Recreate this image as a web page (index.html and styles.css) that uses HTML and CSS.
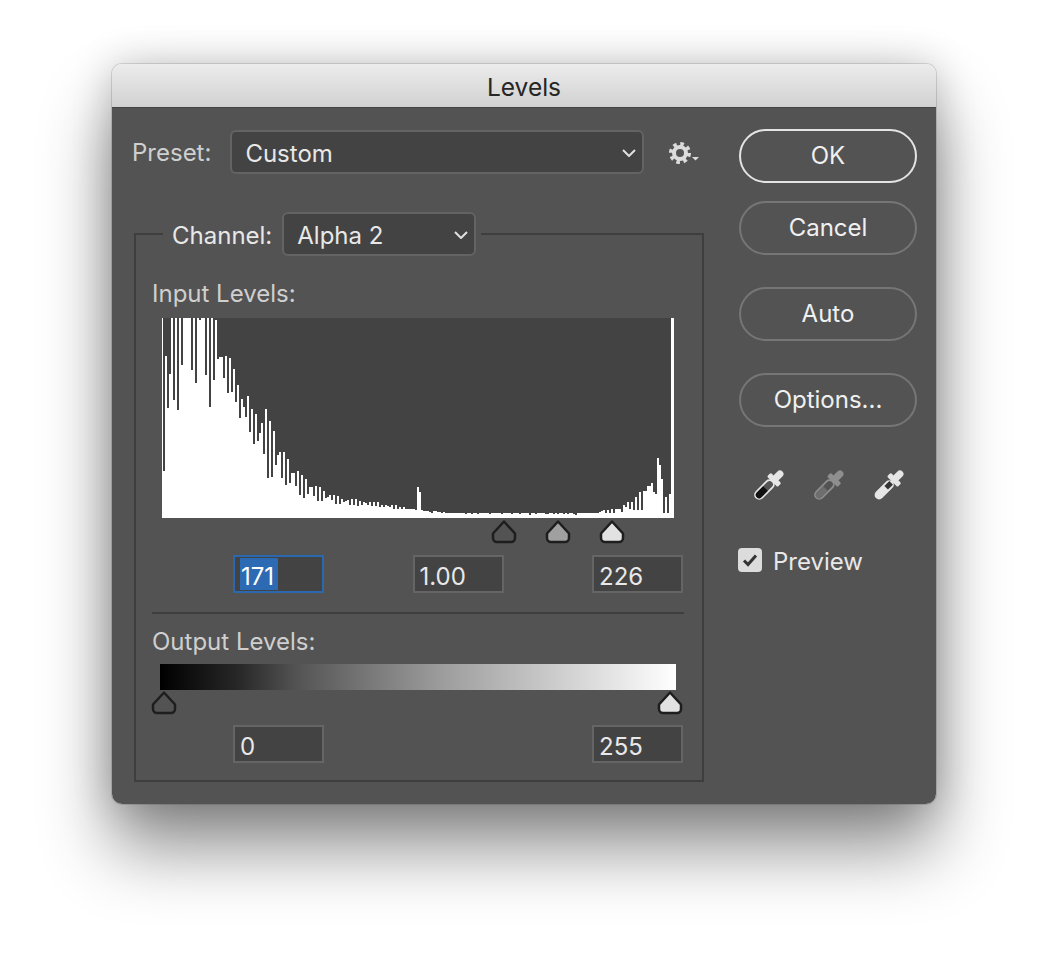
FILE: index.html
```html
<!DOCTYPE html>
<html lang="en">
<head>
    <meta charset="UTF-8">
    <title>Levels</title>
    <link rel="stylesheet" href="styles.css">
</head>
<body>

<div class="window">
    <div class="titlebar">Levels</div>
    <div class="content">
        <div class="main">
            <div class="preset-row">
                <span class="label-dim">Preset:</span>
                <div class="select select-preset">
                    <span>Custom</span>
                    <svg class="chevron" width="14" height="8" viewBox="0 0 14 8"><path d="M1 1l6 6 6-6"/></svg>
                </div>
                <svg class="gear" width="32" height="24" viewBox="0 0 32 24">
                    <circle class="gear-teeth" cx="11" cy="11" r="9"/>
                    <circle class="gear-ring" cx="11" cy="11" r="6"/>
                    <path class="gear-caret" d="M23 15h7l-3.500 3.500z"/>
                </svg>
            </div>

            <fieldset class="group">
                <legend class="channel">
                    <span class="channel-label">Channel:</span>
                    <div class="select select-channel">
                        <span>Alpha 2</span>
                        <svg class="chevron" width="14" height="8" viewBox="0 0 14 8"><path d="M1 1l6 6 6-6"/></svg>
                    </div>
                </legend>

                <div class="label-dim section-input">Input Levels:</div>
                <svg id="histogram" class="histogram" width="512" height="200" viewBox="0 0 512 200">
                    <path id="histogramPath" fill="#fff"/>
                </svg>
                <div class="markers-input">
                    <svg class="marker" viewBox="0 0 26 24"><path class="m-black" d="M13 1.500L24 13.500v4.500a4 4 0 0 1-4 4H6a4 4 0 0 1-4-4v-4.500z"/></svg>
                    <svg class="marker" viewBox="0 0 26 24"><path class="m-gray" d="M13 1.500L24 13.500v4.500a4 4 0 0 1-4 4H6a4 4 0 0 1-4-4v-4.500z"/></svg>
                    <svg class="marker" viewBox="0 0 26 24"><path class="m-white" d="M13 1.500L24 13.500v4.500a4 4 0 0 1-4 4H6a4 4 0 0 1-4-4v-4.500z"/></svg>
                </div>
                <div class="fields fields-input">
                    <div class="field field-active"><span class="selected">171</span></div>
                    <div class="field">1.00</div>
                    <div class="field">226</div>
                </div>

                <div class="divider"></div>

                <div class="label-dim section-output">Output Levels:</div>
                <div class="gradient"></div>
                <div class="markers-output">
                    <svg class="marker" viewBox="0 0 26 24"><path class="m-black" d="M13 1.500L24 13.500v4.500a4 4 0 0 1-4 4H6a4 4 0 0 1-4-4v-4.500z"/></svg>
                    <svg class="marker" viewBox="0 0 26 24"><path class="m-white" d="M13 1.500L24 13.500v4.500a4 4 0 0 1-4 4H6a4 4 0 0 1-4-4v-4.500z"/></svg>
                </div>
                <div class="fields fields-output">
                    <div class="field">0</div>
                    <div class="field">255</div>
                </div>
            </fieldset>
        </div>

        <div class="side">
            <button class="btn btn-default" type="button">OK</button>
            <button class="btn btn-cancel" type="button">Cancel</button>
            <button class="btn btn-auto" type="button">Auto</button>
            <button class="btn btn-options" type="button">Options...</button>

            <div class="droppers">
                <svg width="32" height="32" viewBox="0 0 32 32">
                    <g transform="rotate(45 16 16)">
                        <rect x="12.500" y="-3" width="7" height="12" rx="3.500" fill="#e6e6e6"/>
                        <rect x="8.500" y="6" width="15" height="5.500" rx="1.500" fill="#e6e6e6"/>
                        <rect x="11.800" y="11" width="8.400" height="23" rx="4.200" fill="#535353" stroke="#e6e6e6" stroke-width="1.800"/>
                        <path d="M12.700 21h6.600v9a3.300 3.300 0 0 1-6.600 0z" fill="#111"/>
                    </g>
                </svg>
                <svg width="32" height="32" viewBox="0 0 32 32">
                    <g transform="rotate(45 16 16)">
                        <rect x="12.500" y="-3" width="7" height="12" rx="3.500" fill="#8e8e8e"/>
                        <rect x="8.500" y="6" width="15" height="5.500" rx="1.500" fill="#8e8e8e"/>
                        <rect x="11.800" y="11" width="8.400" height="23" rx="4.200" fill="#535353" stroke="#8e8e8e" stroke-width="1.800"/>
                        <path d="M12.700 21h6.600v9a3.300 3.300 0 0 1-6.600 0z" fill="#6e6e6e"/>
                    </g>
                </svg>
                <svg width="32" height="32" viewBox="0 0 32 32">
                    <g transform="rotate(45 16 16)">
                        <rect x="12.500" y="-3" width="7" height="12" rx="3.500" fill="#e6e6e6"/>
                        <rect x="8.500" y="6" width="15" height="5.500" rx="1.500" fill="#e6e6e6"/>
                        <rect x="11.500" y="11" width="9" height="23.500" rx="4.500" fill="#e6e6e6"/>
                        <rect x="13.500" y="13" width="5" height="7" fill="#333"/>
                    </g>
                </svg>
            </div>

            <div class="preview">
                <svg class="checkbox" width="24" height="24" viewBox="0 0 24 24">
                    <rect width="24" height="24" rx="4" fill="#dcdcdc"/>
                    <path d="M6 12.500l4 4 8-9" fill="none" stroke="#333" stroke-width="3"/>
                </svg>
                <span class="preview-label">Preview</span>
            </div>
        </div>
    </div>
</div>

<script src="histogram.js"></script>
</body>
</html>
```

FILE: styles.css
```css
* {
    box-sizing: border-box;
}
body {
    margin: 0;
    height: 964px;
    overflow: hidden;
    background-color: #fff;
    font-family: Inter, "Liberation Sans", sans-serif;
    font-size: 24px;
    color: #e8e8e8;
}
.window {
    width: 824px;
    height: 740px;
    margin: 64px 0 0 112px;
    border-radius: 10px;
    overflow: visible;
    box-shadow: 0 0 0 1px rgba(0, 0, 0, 0.12), 0 44px 70px rgba(0, 0, 0, 0.45), 0 0 40px rgba(0, 0, 0, 0.2);
}
.titlebar {
    height: 44px;
    line-height: 46px;
    font-size: 24.500px;
    text-align: center;
    color: #262626;
    border-radius: 10px 10px 0 0;
    background: linear-gradient(#ececec, #d1d1d1);
    border-bottom: 1px solid #444;
}
.content {
    display: flex;
    height: 696px;
    padding: 22px 19px 22px 20px;
    background-color: #535353;
    border-radius: 0 0 10px 10px;
}
.main {
    width: 572px;
}
.label-dim {
    height: 30px;
    color: #cfcfcf;
    line-height: 32px;
}
.preset-row {
    display: flex;
    align-items: center;
    height: 44px;
}
.select {
    display: flex;
    align-items: center;
    justify-content: space-between;
    height: 44px;
    padding: 2px 6px 0 13px;
    background-color: #434343;
    border: 2px solid #636363;
    border-radius: 6px;
}
.select-preset {
    width: 414px;
    margin-left: 19px;
}
.select-channel {
    width: 194px;
}
.chevron path {
    fill: none;
    stroke: #e0e0e0;
    stroke-width: 2;
}
.gear {
    margin: 4px 0 0 25px;
}
.gear-teeth {
    fill: none;
    stroke: #dcdcdc;
    stroke-width: 4;
    stroke-dasharray: 3.500 3.570;
}
.gear-ring {
    fill: none;
    stroke: #dcdcdc;
    stroke-width: 4;
}
.gear-caret {
    fill: #dcdcdc;
}
.group {
    width: 570px;
    min-width: 0;
    margin: 38px 0 0 2px;
    padding: 0 18px 17px 16px;
    border: 2px solid #3e3e3e;
}
.channel {
    display: flex;
    align-items: center;
    gap: 10px;
    height: 44px;
    margin-left: 11px;
    padding: 0 5px 0 9px;
}
.channel-label {
    padding-top: 2px;
}
.section-input {
    margin-top: 22px;
}
.histogram {
    display: block;
    margin: 10px 0 0 10px;
    background-color: #434343;
}
.markers-input {
    display: flex;
    gap: 28px;
    margin-top: 2px;
    padding-left: 339px;
}
.marker {
    display: block;
    width: 26px;
    height: 24px;
    stroke: #1e1e1e;
    stroke-width: 2.500;
    stroke-linejoin: round;
    overflow: visible;
}
.m-black {
    fill: none;
}
.m-gray {
    fill: #a0a0a0;
}
.m-white {
    fill: #e2e2e2;
}
.fields {
    display: flex;
    justify-content: space-between;
    padding: 0 1px 0 81px;
}
.fields-input {
    margin-top: 11px;
}
.fields-output {
    margin-top: 10px;
}
.field {
    width: 91px;
    height: 38px;
    padding-left: 5px;
    line-height: 40px;
    background-color: #434343;
    border: 2px solid #656565;
}
.field-active {
    border-color: #2a68b0;
}
.selected {
    display: inline-block;
    min-width: 38px;
    height: 32px;
    margin-top: 1px;
    padding: 0 1px;
    line-height: 38px;
    vertical-align: top;
    background-color: #2c6bb3;
    color: #fff;
}
.divider {
    height: 2px;
    margin-top: 19px;
    background-color: #3e3e3e;
}
.section-output {
    margin-top: 12px;
}
.gradient {
    width: 516px;
    height: 26px;
    margin: 8px 0 0 8px;
    background: linear-gradient(to right, #000, #272727 15%, #555 27%, #9b9b9b 54%, #fff);
}
.markers-output {
    display: flex;
    justify-content: space-between;
    width: 532px;
    margin: 1px 0 0 -1px;
}
.side {
    width: 178px;
    margin-left: 35px;
}
.btn {
    display: block;
    width: 178px;
    height: 54px;
    padding: 0 0 2px;
    font: inherit;
    color: #f0f0f0;
    background-color: transparent;
    border: 2px solid #767676;
    border-radius: 27px;
}
.btn-default {
    margin-top: -1px;
    border-color: #e4e4e4;
}
.btn-cancel {
    margin-top: 18px;
}
.btn-auto,
.btn-options {
    margin-top: 32px;
}
.droppers {
    display: flex;
    gap: 28px;
    margin: 42px 0 0 14px;
}
.preview {
    display: flex;
    align-items: center;
    gap: 11px;
    height: 30px;
    margin-top: 44px;
}
.preview-label {
    padding-top: 2px;
}
.checkbox {
    flex: none;
    margin-left: -1px;
}
```

FILE: histogram.js
```js
// Heights of the 2px bins, read left to right
const bins = [
    47, 162, 110, 144, 200, 118, 200, 108, 200, 153,
    200, 200, 200, 200, 148, 200, 135, 200, 198, 200,
    200, 143, 200, 111, 200, 138, 198, 159, 161, 161,
    140, 162, 125, 160, 126, 149, 116, 133, 100, 119,
    111, 101, 122, 86, 109, 74, 104, 77, 85, 95,
    64, 109, 40, 97, 41, 87, 53, 63, 66, 40,
    66, 33, 59, 35, 45, 45, 32, 47, 23, 43,
    20, 39, 24, 31, 31, 22, 32, 17, 31, 17,
    27, 20, 21, 23, 18, 23, 14, 22, 14, 19,
    16, 17, 18, 13, 19, 13, 19, 12, 17, 13,
    16, 15, 13, 16, 12, 16, 12, 16, 11, 13,
    11, 13, 12, 11, 13, 9, 13, 9, 11, 9,
    11, 9, 9, 9, 9, 9, 8, 31, 26,
    8, 7, 7, 7, 6, 5, 7, 7, 6, 6, 5, 6, 5,
    5, 5, 5, 5, 5, 5, 5, 5, 5, 4, 5, 5, 4, 5, 5, 4, 5, 5, 5, 5,
    5, 4, 5, 5, 5, 5, 5, 4, 5, 5, 5, 5, 4, 5, 5, 5, 4, 5, 5, 5,
    5, 3, 5, 5, 4, 5, 5, 5, 5, 4, 4, 5, 5, 4, 5, 4, 5, 5, 4, 5,
    4, 5, 5, 4, 3, 5, 5, 5, 5, 5, 5, 5, 5, 5, 5, 5,
    6, 7, 8, 5, 8, 5, 9, 5, 9, 9, 9, 6, 13, 11, 16, 9, 16, 8, 21, 8,
    26, 8, 27, 27, 32, 32, 35, 26, 24, 60, 53, 39, 5, 21, 5, 24, 200
];

// One stepped outline, with the 1px white edge at the far left
let d = "M0 200V0H1";
bins.forEach(function(height, i) {
    d += "V" + (200 - height) + "H" + (1 + (i + 1) * 2);
});
d += "V0H512V200Z";
document.getElementById("histogramPath").setAttribute("d", d);
```
